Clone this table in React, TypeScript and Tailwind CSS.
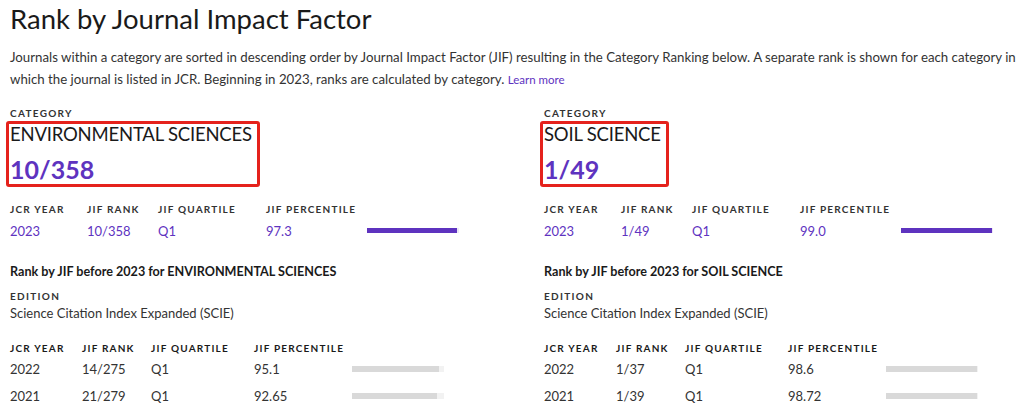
import React from "react";

type Row = { year: string; rank: string; quartile: string; percentile: string; pct: number };

const CategoryBlock = ({
  name,
  rank,
  current,
  history,
}: {
  name: string;
  rank: string;
  current: Row;
  history: Row[];
}) => {
  return (
    <div className="flex flex-col">
      <div className="text-[10px] font-bold tracking-[1.3px] text-[#333] leading-[12px]">CATEGORY</div>
      <div className="relative w-fit">
        <div className="text-[18.5px] tracking-[-0.2px] leading-[26px] text-[#1a1a1a] mt-[2px]">{name}</div>
        <div className="text-[25px] leading-[34px] font-bold text-[#5e33bf] mt-[5px]">{rank}</div>
        <div className="absolute -left-[4px] -right-[8px] top-[2px] h-[66px] border-[3px] border-[#e5221c] rounded-[3px]" />
      </div>

      <div className="mt-[16px] grid grid-cols-[77px_71px_108px_101px_92px] items-center">
        <div className="text-[10px] font-bold tracking-[1.2px] text-[#333] leading-[14px]">JCR YEAR</div>
        <div className="text-[10px] font-bold tracking-[1.2px] text-[#333] leading-[14px]">JIF RANK</div>
        <div className="text-[10px] font-bold tracking-[1.2px] text-[#333] leading-[14px]">JIF QUARTILE</div>
        <div className="text-[10px] font-bold tracking-[1.2px] text-[#333] leading-[14px]">JIF PERCENTILE</div>
        <div />
        <div className="text-[13px] text-[#5e33bf] leading-[18px] mt-[6px]">{current.year}</div>
        <div className="text-[13px] text-[#5e33bf] leading-[18px] mt-[6px]">{current.rank}</div>
        <div className="text-[13px] text-[#5e33bf] leading-[18px] mt-[6px]">{current.quartile}</div>
        <div className="text-[13px] text-[#5e33bf] leading-[18px] mt-[6px]">{current.percentile}</div>
        <div className="mt-[5px] h-[5px] w-[92px] bg-[#ece8f6]">
          <div className="h-[5px] bg-[#5e33bf]" style={{ width: `${current.pct}%` }} />
        </div>
      </div>

      <div className="mt-[23px] text-[12.6px] font-bold text-[#1a1a1a] leading-[18px]">
        Rank by JIF before 2023 for {name}
      </div>
      <div className="mt-[9px] text-[10px] font-bold tracking-[1.3px] text-[#333] leading-[12px]">EDITION</div>
      <div className="mt-[1px] text-[13px] text-[#333] leading-[20px]">Science Citation Index Expanded (SCIE)</div>

      <div className="mt-[18px] grid grid-cols-[72px_69px_103px_98px_92px] items-center">
        <div className="text-[10px] font-bold tracking-[1.2px] text-[#1a1a1a] leading-[14px]">JCR YEAR</div>
        <div className="text-[10px] font-bold tracking-[1.2px] text-[#1a1a1a] leading-[14px]">JIF RANK</div>
        <div className="text-[10px] font-bold tracking-[1.2px] text-[#1a1a1a] leading-[14px]">JIF QUARTILE</div>
        <div className="text-[10px] font-bold tracking-[1.2px] text-[#1a1a1a] leading-[14px]">JIF PERCENTILE</div>
        <div />
        {history.map((r, i) => (
          <React.Fragment key={r.year}>
            <div className={`text-[13px] text-[#333] leading-[18px] ${i === 0 ? "mt-[5px]" : "mt-[9px]"}`}>{r.year}</div>
            <div className={`text-[13px] text-[#333] leading-[18px] ${i === 0 ? "mt-[5px]" : "mt-[9px]"}`}>{r.rank}</div>
            <div className={`text-[13px] text-[#333] leading-[18px] ${i === 0 ? "mt-[5px]" : "mt-[9px]"}`}>{r.quartile}</div>
            <div className={`text-[13px] text-[#333] leading-[18px] ${i === 0 ? "mt-[5px]" : "mt-[9px]"}`}>{r.percentile}</div>
            <div className={`h-[6px] w-[92px] bg-[#f2f2f2] ${i === 0 ? "mt-[5px]" : "mt-[9px]"}`}>
              <div className="h-[6px] bg-[#d9d9d9]" style={{ width: `${r.pct}%` }} />
            </div>
          </React.Fragment>
        ))}
      </div>
    </div>
  );
};

export default function App() {
  return (
    <div className="w-[1024px] h-[413px] overflow-hidden bg-white pl-[10px] font-['Lato',sans-serif]">
      <h1 className="text-[27.5px] leading-[36px] text-[#1a1a1a] pt-[1px]">Rank by Journal Impact Factor</h1>
      <p className="mt-[9px] w-[1020px] text-[13.25px] leading-[22px] text-[#333] whitespace-nowrap">
        Journals within a category are sorted in descending order by Journal Impact Factor (JIF) resulting in the
        Category Ranking below. A separate rank is shown for each category in
        <br />
        which the journal is listed in JCR. Beginning in 2023, ranks are calculated by category.{" "}
        <span className="text-[11.5px] text-[#5e33bf]">Learn more</span>
      </p>
      <div className="mt-[16px] grid grid-cols-[534px_534px]">
        <CategoryBlock
          name="ENVIRONMENTAL SCIENCES"
          rank="10/358"
          current={{ year: "2023", rank: "10/358", quartile: "Q1", percentile: "97.3", pct: 97.3 }}
          history={[
            { year: "2022", rank: "14/275", quartile: "Q1", percentile: "95.1", pct: 95.1 },
            { year: "2021", rank: "21/279", quartile: "Q1", percentile: "92.65", pct: 92.65 },
          ]}
        />
        <CategoryBlock
          name="SOIL SCIENCE"
          rank="1/49"
          current={{ year: "2023", rank: "1/49", quartile: "Q1", percentile: "99.0", pct: 99 }}
          history={[
            { year: "2022", rank: "1/37", quartile: "Q1", percentile: "98.6", pct: 98.6 },
            { year: "2021", rank: "1/39", quartile: "Q1", percentile: "98.72", pct: 98.72 },
          ]}
        />
      </div>
    </div>
  );
}
